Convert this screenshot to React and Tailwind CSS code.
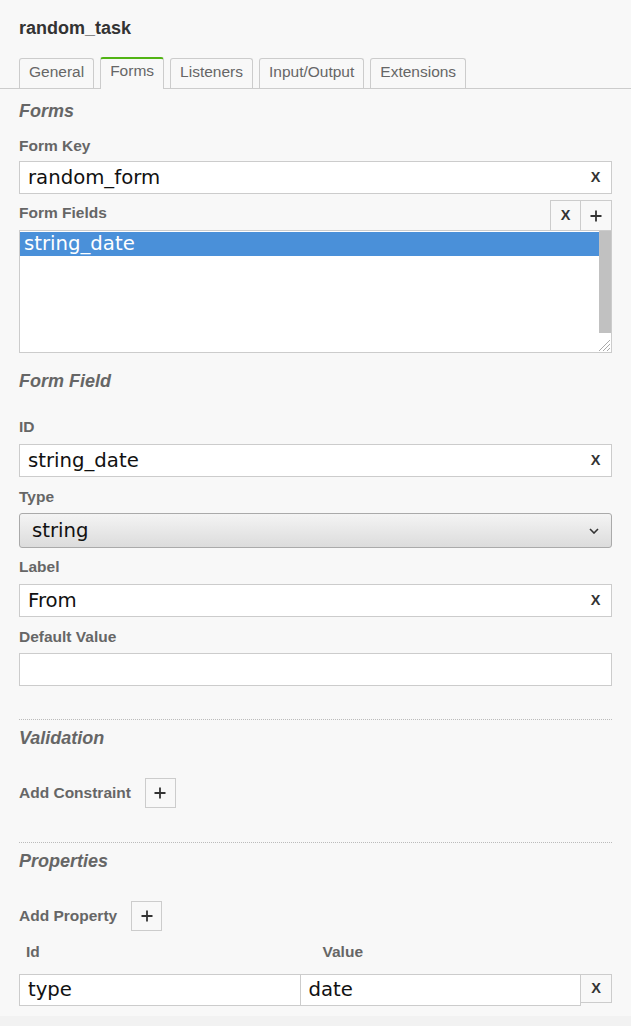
import React from 'react';

const tabs = ['General', 'Forms', 'Listeners', 'Input/Output', 'Extensions'];

function Label({ children, className = '' }) {
  return (
    <div className={`text-[15.5px] leading-[18px] font-bold text-[#666] ${className}`}>
      {children}
    </div>
  );
}

function Header({ children, className = '' }) {
  return (
    <div className={`text-[18px] leading-[21px] font-bold italic text-[#666] ${className}`}>
      {children}
    </div>
  );
}

function ClearX() {
  return (
    <span className="w-[31px] shrink-0 text-center font-['Liberation_Sans',Arial,sans-serif] text-[14.5px] font-bold text-[#333]">
      X
    </span>
  );
}

function PlusIcon() {
  return (
    <svg width="12" height="12" viewBox="0 0 12 12" className="block">
      <path d="M6 0.5v11M0.5 6h11" stroke="#333" strokeWidth="1.8" />
    </svg>
  );
}

function TextField({ value, className = '', clear = true }) {
  return (
    <div className={`flex h-[33px] items-center border border-[#ccc] bg-white ${className}`}>
      <span className="flex-1 pl-[8px] font-['DejaVu_Sans',sans-serif] text-[19.7px] leading-[24px] text-[#111]">
        {value}
      </span>
      {clear && <ClearX />}
    </div>
  );
}

function Dotted({ className = '' }) {
  return <div className={`border-t border-dotted border-[#bbb] ${className}`} />;
}

function AddButton() {
  return (
    <div className="flex h-[30px] w-[31px] items-center justify-center border border-[#ccc] bg-[#f8f8f8]">
      <PlusIcon />
    </div>
  );
}

export default function App() {
  return (
    <div className="min-h-[1026px] w-full bg-[#f2f2f2] font-['Liberation_Sans',Arial,sans-serif]">
      <div className="bg-[#f8f8f8] pb-[10px]">
        <div className="px-[19px] pt-[18px] text-[18px] leading-[21px] font-bold text-[#333]">
          random_task
        </div>

        <div className="mt-[18px] flex items-end gap-[6px] border-b border-[#ccc] pl-[19px]">
          {tabs.map((t) =>
            t === 'Forms' ? (
              <div
                key={t}
                className="-mb-px h-[32px] rounded-t-[3px] border border-b-0 border-[#ccc] border-t-2 border-t-[#52b415] bg-[#f8f8f8] px-[9px] pt-[3px] text-[15.5px] leading-[18px] text-[#666]"
              >
                {t}
              </div>
            ) : (
              <div
                key={t}
                className="h-[30px] rounded-t-[3px] border border-b-0 border-[#ccc] px-[9px] pt-[4px] text-[15.5px] leading-[18px] text-[#666]"
              >
                {t}
              </div>
            )
          )}
        </div>

        <div className="px-[19px]">
          <Header className="mt-[12px]">Forms</Header>

          <Label className="mt-[15px]">Form Key</Label>
          <TextField value="random_form" className="mt-[6px]" />

          <div className="mt-[6px] flex h-[30px] items-start justify-between">
            <Label className="mt-[4px]">Form Fields</Label>
            <div className="flex h-[30px] border border-b-0 border-[#ccc] bg-[#f8f8f8] text-[#333]">
              <div className="flex w-[30px] items-center justify-center border-r border-[#ccc] text-[14.5px] font-bold">
                X
              </div>
              <div className="flex w-[30px] items-center justify-center">
                <PlusIcon />
              </div>
            </div>
          </div>
          <div className="relative h-[123px] border border-[#ccc] bg-white pt-px">
            <div className="mr-[12px] h-[24px] bg-[#4a90d9] pl-[4px] font-['DejaVu_Sans',sans-serif] text-[19.7px] leading-[24px] text-white">
              string_date
            </div>
            <div className="absolute right-0 top-0 h-[102px] w-[12px] bg-[#c1c1c1]" />
            <svg width="13" height="13" viewBox="0 0 13 13" className="absolute bottom-0 right-0">
              <path d="M12 1L1 12M12 5L5 12M12 9L9 12" stroke="#aaa" strokeWidth="1" />
            </svg>
          </div>

          <Header className="mt-[18px]">Form Field</Header>

          <Label className="mt-[26px]">ID</Label>
          <TextField value="string_date" className="mt-[8px]" />

          <Label className="mt-[11px]">Type</Label>
          <div className="mt-[7px] flex h-[35px] items-center rounded-[3px] border border-[#aaa] bg-linear-to-b from-[#f4f4f4] to-[#dcdcdc] pl-[12px] pr-[12px]">
            <span className="flex-1 font-['DejaVu_Sans',sans-serif] text-[19.7px] leading-[24px] text-[#111]">string</span>
            <svg width="10" height="6" viewBox="0 0 10 6">
              <path d="M1 1l4 4 4-4" fill="none" stroke="#333" strokeWidth="1.6" />
            </svg>
          </div>

          <Label className="mt-[10px]">Label</Label>
          <TextField value="From" className="mt-[8px]" />

          <Label className="mt-[11px]">Default Value</Label>
          <TextField value="" clear={false} className="mt-[7px]" />

          <Dotted className="mt-[33px]" />
          <Header className="mt-[8px]">Validation</Header>
          <div className="mt-[29px] flex items-center gap-[14px]">
            <Label>Add Constraint</Label>
            <AddButton />
          </div>

          <Dotted className="mt-[34px]" />
          <Header className="mt-[8px]">Properties</Header>
          <div className="mt-[29px] flex items-center gap-[14px]">
            <Label>Add Property</Label>
            <AddButton />
          </div>

          <div className="mt-[12px] grid grid-cols-2">
            <Label className="pl-[7px]">Id</Label>
            <Label className="pl-[7px]">Value</Label>
          </div>
          <div className="mt-[13px] flex items-start">
            <div className="flex flex-1">
              <div className="h-[32px] flex-1 border border-[#ccc] bg-white pl-[8px] font-['DejaVu_Sans',sans-serif] text-[19.7px] leading-[30px] text-[#111]">
                type
              </div>
              <div className="h-[32px] flex-1 border border-l-0 border-[#ccc] bg-white pl-[8px] font-['DejaVu_Sans',sans-serif] text-[19.7px] leading-[30px] text-[#111]">
                date
              </div>
            </div>
            <div className="flex h-[29px] w-[31px] items-center justify-center border border-l-0 border-[#ccc] bg-[#f8f8f8] text-[14.5px] font-bold text-[#333]">
              X
            </div>
          </div>
        </div>
      </div>
    </div>
  );
}
